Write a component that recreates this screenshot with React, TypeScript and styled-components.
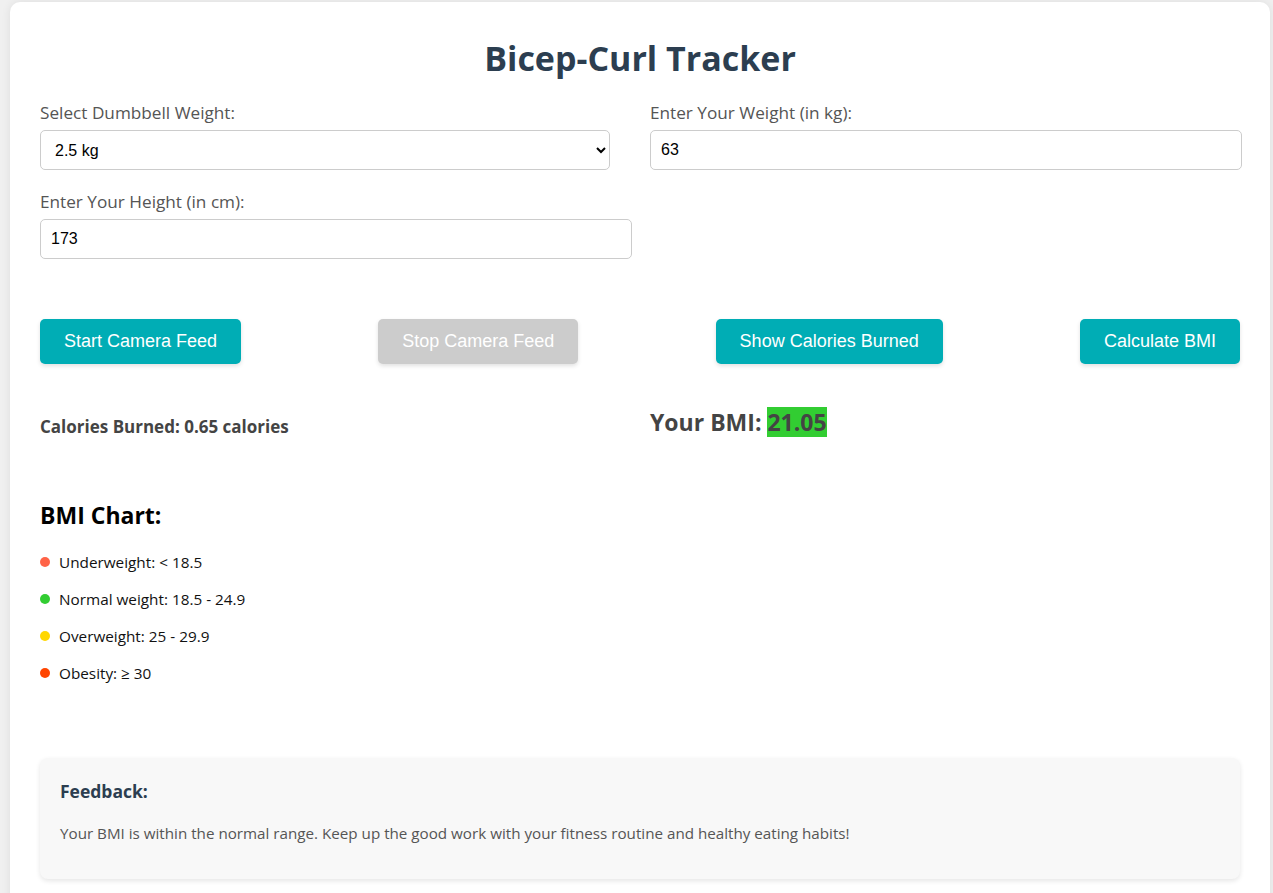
import React from "react";
import styled, { createGlobalStyle } from "styled-components";

const GlobalStyle = createGlobalStyle`
  html, body {
    margin: 0;
    padding: 0;
    background: #f0f0f0;
  }
  body {
    font-family: "Open Sans", "Noto Sans", sans-serif;
    overflow: hidden;
  }
`;

const Page = styled.div`
  padding: 2px 3px 0 10px;
`;

const Card = styled.main`
  box-sizing: border-box;
  width: 1260px;
  background: #ffffff;
  border-radius: 10px;
  box-shadow: 0 0 10px rgba(0, 0, 0, 0.08);
  padding: 30px 30px 40px;
`;

const Title = styled.h1`
  margin: 7px 0 25px;
  text-align: center;
  font-size: 34px;
  line-height: 38px;
  font-weight: 700;
  color: #2c3e50;
`;

const FormGrid = styled.div`
  display: grid;
  grid-template-columns: 570px 570px;
  column-gap: 40px;
  row-gap: 21px;
`;

const FormGroup = styled.div`
  display: flex;
  flex-direction: column;
  align-items: flex-start;
`;

const Label = styled.label`
  font-size: 17.2px;
  line-height: 22px;
  color: #555;
  margin-bottom: 6px;
`;

const Select = styled.select`
  box-sizing: border-box;
  width: 570px;
  height: 40px;
  padding: 0 10px;
  font-family: "Liberation Sans", Arial, sans-serif;
  font-size: 16px;
  color: #000;
  background: #fff;
  border: 1px solid #ccc;
  border-radius: 5px;
`;

const Input = styled.input`
  box-sizing: border-box;
  width: 592px;
  height: 40px;
  padding: 0 10px;
  font-family: "Liberation Sans", Arial, sans-serif;
  font-size: 16px;
  color: #000;
  border: 1px solid #ccc;
  border-radius: 5px;
`;

const ButtonRow = styled.div`
  display: flex;
  justify-content: space-between;
  margin-top: 60px;
`;

const Button = styled.button<{ $disabled?: boolean }>`
  height: 45px;
  padding: 0 24px;
  font-family: "Liberation Sans", Arial, sans-serif;
  font-size: 18px;
  color: #fff;
  background: ${(p) => (p.$disabled ? "#cccccc" : "#00adb5")};
  border: none;
  border-radius: 5px;
  box-shadow: 0 2px 4px rgba(0, 0, 0, 0.12);
  cursor: ${(p) => (p.$disabled ? "not-allowed" : "pointer")};
`;

const Results = styled.div`
  display: grid;
  grid-template-columns: 610px 590px;
  margin-top: 43px;
  align-items: start;
`;

const Calories = styled.p`
  margin: 0;
  padding-top: 8px;
  font-size: 17px;
  line-height: 24px;
  font-weight: 700;
  color: #444;
`;

const BmiText = styled.h2`
  margin: 0;
  font-size: 23px;
  line-height: 30px;
  font-weight: 700;
  color: #444;
`;

const BmiValue = styled.span<{ $color: string }>`
  display: inline-block;
  background: ${(p) => p.$color};
  color: #444;
`;

const ChartTitle = styled.h3`
  margin: 61px 0 22px;
  font-size: 23px;
  line-height: 30px;
  font-weight: 700;
  color: #000;
`;

const ChartList = styled.ul`
  list-style: none;
  margin: 0;
  padding: 0;
  display: flex;
  flex-direction: column;
  gap: 17px;
`;

const ChartItem = styled.li`
  display: flex;
  align-items: center;
  gap: 9px;
  font-size: 15.3px;
  line-height: 20px;
  color: #111;
`;

const Dot = styled.span<{ $color: string }>`
  width: 10px;
  height: 10px;
  border-radius: 50%;
  background: ${(p) => p.$color};
  flex: none;
`;

const Feedback = styled.section`
  margin-top: 75px;
  background: #f8f8f8;
  border-radius: 8px;
  box-shadow: 0 2px 5px rgba(0, 0, 0, 0.1);
  padding: 20px 20px 35px;
`;

const FeedbackTitle = styled.h4`
  margin: 0 0 18px;
  font-size: 17.5px;
  line-height: 26px;
  font-weight: 700;
  color: #2c3e50;
`;

const FeedbackText = styled.p`
  margin: 0;
  font-size: 15.2px;
  line-height: 22px;
  color: #555;
`;

const chart = [
  { color: "#ff6347", text: "Underweight: < 18.5" },
  { color: "#32cd32", text: "Normal weight: 18.5 - 24.9" },
  { color: "#ffd700", text: "Overweight: 25 - 29.9" },
  { color: "#ff4500", text: "Obesity: ≥ 30" },
];

export default function App() {
  return (
    <Page>
      <GlobalStyle />
      <Card>
        <Title>Bicep-Curl Tracker</Title>
        <FormGrid>
          <FormGroup>
            <Label htmlFor="dumbbell">Select Dumbbell Weight:</Label>
            <Select id="dumbbell" defaultValue="2.5">
              <option value="2.5">2.5 kg</option>
              <option value="5">5 kg</option>
              <option value="7.5">7.5 kg</option>
              <option value="10">10 kg</option>
            </Select>
          </FormGroup>
          <FormGroup>
            <Label htmlFor="weight">Enter Your Weight (in kg):</Label>
            <Input id="weight" type="text" defaultValue="63" />
          </FormGroup>
          <FormGroup>
            <Label htmlFor="height">Enter Your Height (in cm):</Label>
            <Input id="height" type="text" defaultValue="173" />
          </FormGroup>
        </FormGrid>
        <ButtonRow>
          <Button>Start Camera Feed</Button>
          <Button $disabled>Stop Camera Feed</Button>
          <Button>Show Calories Burned</Button>
          <Button>Calculate BMI</Button>
        </ButtonRow>
        <Results>
          <Calories>Calories Burned: 0.65 calories</Calories>
          <BmiText>
            Your BMI: <BmiValue $color="#32cd32">21.05</BmiValue>
          </BmiText>
        </Results>
        <ChartTitle>BMI Chart:</ChartTitle>
        <ChartList>
          {chart.map((c) => (
            <ChartItem key={c.text}>
              <Dot $color={c.color} />
              {c.text}
            </ChartItem>
          ))}
        </ChartList>
        <Feedback>
          <FeedbackTitle>Feedback:</FeedbackTitle>
          <FeedbackText>
            Your BMI is within the normal range. Keep up the good work with your
            fitness routine and healthy eating habits!
          </FeedbackText>
        </Feedback>
      </Card>
    </Page>
  );
}
